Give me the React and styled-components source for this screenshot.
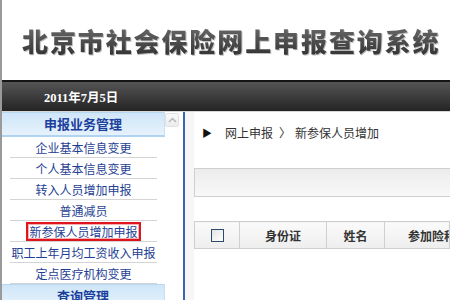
import styled, { createGlobalStyle } from "styled-components";

const GlobalStyle = createGlobalStyle`
  html, body {
    margin: 0;
    padding: 0;
    background: #fff;
  }
  body {
    font-family: "Noto Sans CJK SC", "Liberation Sans", sans-serif;
    font-size: 12px;
  }
`;

const menuItems = [
  "企业基本信息变更",
  "个人基本信息变更",
  "转入人员增加申报",
  "普通减员",
  "新参保人员增加申报",
  "职工上年月均工资收入申报",
  "定点医疗机构变更",
];

const App = () => {
  return (
    <Page>
      <GlobalStyle />
      <Header>
        <Title>北京市社会保险网上申报查询系统</Title>
      </Header>
      <NavBar>
        <DateText>2011年7月5日</DateText>
      </NavBar>
      <Main>
        <Sidebar>
          <GroupTitle>申报业务管理</GroupTitle>
          {menuItems.map((item) => (
            <MenuItem key={item}>
              <MenuLink $active={item === "新参保人员增加申报"}>{item}</MenuLink>
            </MenuItem>
          ))}
          <GroupTitle>查询管理</GroupTitle>
        </Sidebar>
        <ScrollTrack>
          <ScrollButton>
            <svg width="9" height="6" viewBox="0 0 9 6">
              <path d="M1 5 L4.5 1.5 L8 5" fill="none" stroke="#b8b8b8" strokeWidth="1.5" />
            </svg>
          </ScrollButton>
        </ScrollTrack>
        <Divider />
        <Content>
          <Breadcrumb>
            <Arrow>▶</Arrow>
            <span>网上申报</span>
            <Sep>〉</Sep>
            <span>新参保人员增加</span>
          </Breadcrumb>
          <SearchBox />
          <Table>
            <thead>
              <tr>
                <CheckCell>
                  <CheckBox />
                </CheckCell>
                <Th $w={87}>身份证</Th>
                <Th $w={58}>姓名</Th>
                <Th $left>参加险种</Th>
              </tr>
            </thead>
          </Table>
        </Content>
      </Main>
    </Page>
  );
};

export default App;

const Page = styled.div`
  width: 450px;
  height: 300px;
  overflow: hidden;
  border-left: 2px solid #9a9a9a;
  box-sizing: border-box;
`;

const Header = styled.div`
  height: 80px;
  display: flex;
  align-items: center;
  padding-left: 20px;
  box-sizing: border-box;
  background: #fff;
`;

const Title = styled.h1`
  margin: 0;
  font-family: "Noto Sans CJK SC", sans-serif;
  font-size: 26px;
  font-weight: 900;
  letter-spacing: 1.9px;
  white-space: nowrap;
  background: linear-gradient(#707070, #2e2e2e);
  -webkit-background-clip: text;
  background-clip: text;
  color: transparent;
  filter: drop-shadow(1px 1px 0 rgba(0, 0, 0, 0.25));
`;

const NavBar = styled.div`
  height: 31px;
  border-top: 2px solid #151515;
  background: linear-gradient(#555, #3a3a3a 55%, #242424);
  display: flex;
  align-items: center;
  padding-left: 42px;
  box-sizing: border-box;
`;

const DateText = styled.span`
  color: #fff;
  font-family: "Liberation Serif", "Noto Sans CJK SC", serif;
  font-weight: bold;
  font-size: 12.5px;
`;

const Main = styled.div`
  display: flex;
  height: 189px;
  border-top: 1px solid #d8d8d8;
`;

const Sidebar = styled.div`
  width: 163px;
  flex-shrink: 0;
  background: #fff;
`;

const GroupTitle = styled.div`
  height: 25px;
  display: flex;
  align-items: center;
  justify-content: center;
  padding-bottom: 2px;
  font-size: 13px;
  font-weight: bold;
  color: #1c3f9c;
  background: linear-gradient(#cfe6f8, #e6f2fc);
  border-top: 1px solid #b8d8f0;
  border-bottom: 2px solid #b0d4f0;
  border-right: 1px solid #c8e0f4;
  box-sizing: border-box;
`;

const MenuItem = styled.div`
  height: 21px;
  margin: 0 8px;
  border-bottom: 1px solid #d4d4d4;
  display: flex;
  align-items: center;
  justify-content: center;
  box-sizing: border-box;
`;

const MenuLink = styled.span`
  font-size: 12px;
  color: #1f3f94;
  white-space: nowrap;
  padding: 0 1px;
  line-height: 15px;
  outline: ${(p) => (p.$active ? "2px solid #e0141c" : "none")};
  box-shadow: ${(p) => (p.$active ? "inset 0 0 0 1px #f4b0b0" : "none")};
`;

const ScrollTrack = styled.div`
  width: 16px;
  flex-shrink: 0;
  padding-top: 1px;
  background: #fff;
`;

const ScrollButton = styled.div`
  width: 14px;
  height: 14px;
  border: 1px solid #e2e2e2;
  border-radius: 2px;
  background: linear-gradient(#fafafa, #ececec);
  display: flex;
  align-items: center;
  justify-content: center;
  box-sizing: border-box;
`;

const Divider = styled.div`
  width: 11px;
  flex-shrink: 0;
  margin-left: 2px;
  border-left: 2px solid #3a66b0;
  background: #f6f6f6;
  box-sizing: border-box;
`;

const Content = styled.div`
  flex: 1;
  min-width: 0;
  background: #fff;
`;

const Breadcrumb = styled.div`
  display: flex;
  align-items: center;
  height: 40px;
  padding-left: 8px;
  box-sizing: border-box;
  color: #333;
  font-size: 12px;
`;

const Arrow = styled.span`
  font-size: 10px;
  color: #111;
  margin-right: 13px;
`;

const Sep = styled.span`
  margin: 0 4px 0 6px;
`;

const SearchBox = styled.div`
  height: 29px;
  margin-top: 16px;
  border: 1px solid #cfcfcf;
  border-right: none;
  background: linear-gradient(#ececec, #f8f8f8);
  box-sizing: border-box;
`;

const Table = styled.table`
  margin-top: 24px;
  border-collapse: collapse;
  width: 100%;
  table-layout: fixed;
`;

const Th = styled.th`
  width: ${(p) => (p.$w ? `${p.$w}px` : "auto")};
  height: 27px;
  padding: 0 0 0 ${(p) => (p.$left ? "23px" : "0")};
  text-align: ${(p) => (p.$left ? "left" : "center")};
  white-space: nowrap;
  overflow: hidden;
  font-size: 12px;
  font-weight: bold;
  color: #333;
  background: linear-gradient(#fafafa, #eeeeee);
  border: 1px solid #cfcfcf;
  box-sizing: border-box;
`;

const CheckCell = styled(Th)`
  width: 45px;
`;

const CheckBox = styled.div`
  width: 11px;
  height: 11px;
  margin: 0 auto;
  border: 1px solid #2c4a6a;
  background: linear-gradient(135deg, #e4e4e4, #fff);
`;
